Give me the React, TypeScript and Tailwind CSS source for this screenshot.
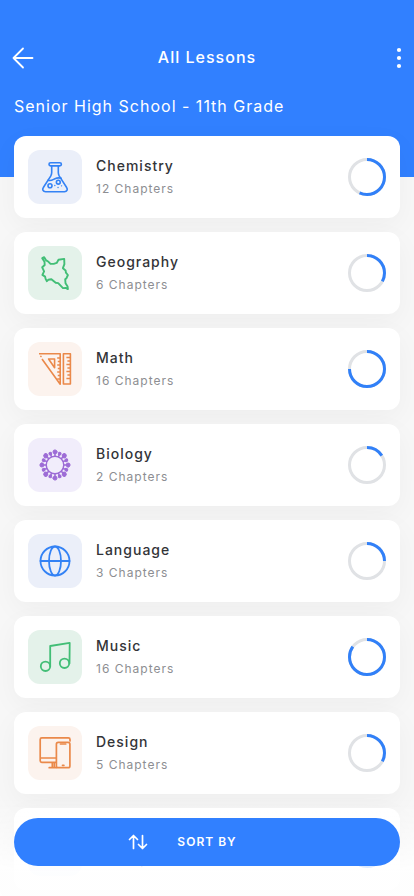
import type { ReactNode } from "react";

type Tone = "blue" | "green" | "orange" | "purple";

interface Lesson {
  title: string;
  chapters: number;
  progress: number;
  tone: Tone;
  icon: ReactNode;
}

const tones: Record<Tone, string> = {
  blue: "bg-[#ebeff9] text-[#3382f5]",
  green: "bg-[#e4f2ea] text-[#42be76]",
  orange: "bg-[#fcf3ee] text-[#ea894a]",
  purple: "bg-[#f1edfb] text-[#9d6cd6]",
};

function Glyph({ children, width = 1.8 }: { children: ReactNode; width?: number }) {
  return (
    <svg
      viewBox="0 0 54 54"
      className="size-full"
      fill="none"
      stroke="currentColor"
      strokeWidth={width}
      strokeLinecap="round"
      strokeLinejoin="round"
      aria-hidden="true"
    >
      {children}
    </svg>
  );
}

const flask = (
  <Glyph width={1.6}>
    <rect x="21" y="12.7" width="12.4" height="3.2" rx="1.6" />
    <path d="M23.7 16v6.500c0 1.400-.4 2.500-1 3.600l-7.200 11.200c-1.700 2.600-.3 4.400 2 4.400h19c2.300 0 3.700-1.800 2-4.400l-7.200-11.200c-.6-1.100-1-2.200-1-3.600V16" />
    <path d="M20 30.300c3.600.9 4.900-.7 7-1.600 2.200-1 4-1.100 6.200-.4" />
    <circle cx="22" cy="35.700" r="2" />
    <circle cx="30.300" cy="32.200" r="1.900" />
    <path strokeWidth="1.300" d="M26.800 35.500h.1M30 37.500h.1M33.500 35.800h.1" />
  </Glyph>
);

const region = (
  <Glyph width={1.9}>
    <path d="M16.200 11.200l2 3.200 2.300 1.400 2 2.100h3.200l3-1 1.800-3.100 5.700-.9.200 5.300-1.500 4 2.700 2.200.3 2.300 2 2.300-1.400 3.200-1.300 1.100.3 4 2.100 3.200.3 2.600-2.200-1.200-2.700.2-4.800-5-2.500-.3-4.300-3.600-3.200.6-1.300 1.400-1.300-2.300-.5-2.300-2.700-1.700 1.700-3.600-1.900-4 2.500-2.300-.2-3.300-2.300-3.500z" />
  </Glyph>
);

const rulers = (
  <Glyph width={1.600}>
    <path strokeLinecap="butt" d="M11 11.800h21.200v30.500L14 17" />
    <path d="M12.900 14.400l.1.100" />
    <path d="M20.600 17h6v8.800z" />
    <path strokeLinecap="butt" d="M35.400 11.800h7v30.200h-7z" />
    <path strokeLinecap="butt" strokeWidth="1.300" d="M32.200 16h-3M32.200 19.500h-2.400M32.200 23h-3M32.200 26.500h-2.400M32.200 30h-3M32.200 33.500h-2.400M32.200 37h-3M42.400 15.500h-4M42.400 19h-3M42.400 22.500h-4M42.400 26h-3M42.400 29.500h-4M42.400 33h-3M42.400 36.500h-4" />
  </Glyph>
);

const cell = (
  <Glyph width={1.500}>
    <circle cx="27" cy="27" r="8.800" />
    {Array.from({ length: 16 }, (_, i) => {
      const large = i % 2 === 0;
      return (
        <g key={i} transform={`rotate(${i * 22.5} 27 27)`}>
          <path d={large ? "M27 18v-4" : "M27 18v-2.500"} />
          <circle cx="27" cy={large ? 13.9 : 14.7} r={large ? 2 : 1.4} fill="currentColor" strokeWidth="1" />
        </g>
      );
    })}
  </Glyph>
);

const globe = (
  <Glyph>
    <circle cx="27" cy="27" r="14.500" />
    <ellipse cx="27" cy="27" rx="6" ry="14.500" />
    <path d="M12.500 27h29" />
  </Glyph>
);

const notes = (
  <Glyph>
    <circle cx="17.500" cy="36.300" r="4.700" />
    <circle cx="36.500" cy="33.300" r="4.700" />
    <path d="M22.200 36.300V16l19.500-3.200-.2 20.500" />
  </Glyph>
);

const devices = (
  <Glyph width={1.7}>
    <path d="M42 15v-1.600c0-1-.6-1.600-1.600-1.600H13.800c-1 0-1.600.6-1.600 1.600v21.300c0 1 .6 1.600 1.600 1.600h14.300M12.200 32h16M24.300 36.500v4M26.300 36.500v4M21.200 41.700h7" />
    <rect x="28.400" y="16.400" width="13.500" height="25.300" rx="1.800" />
    <path d="M32.500 18h5.200M34.500 39.300h1.400" />
  </Glyph>
);

const lessons: Lesson[] = [
  { title: "Chemistry", chapters: 12, progress: 57, tone: "blue", icon: flask },
  { title: "Geography", chapters: 6, progress: 33, tone: "green", icon: region },
  { title: "Math", chapters: 16, progress: 75, tone: "orange", icon: rulers },
  { title: "Biology", chapters: 2, progress: 16, tone: "purple", icon: cell },
  { title: "Language", chapters: 3, progress: 25, tone: "blue", icon: globe },
  { title: "Music", chapters: 16, progress: 85, tone: "green", icon: notes },
  { title: "Design", chapters: 5, progress: 33, tone: "orange", icon: devices },
  { title: "Chemistry", chapters: 12, progress: 57, tone: "blue", icon: flask },
];

function ProgressRing({ value }: { value: number }) {
  return (
    <svg viewBox="0 0 38 38" className="size-[38px] shrink-0" fill="none" strokeWidth="3" role="img" aria-label={`${value}% complete`}>
      <circle cx="19" cy="19" r="17.500" stroke="#e0e2e5" />
      <circle
        cx="19"
        cy="19"
        r="17.500"
        stroke="#3180f8"
        pathLength="100"
        strokeDasharray={`${value} 100`}
        transform="rotate(-90 19 19)"
      />
    </svg>
  );
}

function LessonCard({ lesson }: { lesson: Lesson }) {
  return (
    <li className="flex items-center gap-3.5 rounded-xl bg-white p-3.5 shadow-[0_8px_28px_rgba(0,0,0,0.04)]">
      <div className={`size-[54px] shrink-0 rounded-xl ${tones[lesson.tone]}`}>{lesson.icon}</div>
      <div className="flex min-w-0 flex-1 flex-col gap-[3px] pt-px">
        <h3 className="text-sm leading-5 font-medium tracking-[1px] text-[#333438]">{lesson.title}</h3>
        <p className="text-xs leading-5 tracking-[1px] text-[#8d8e92]">{lesson.chapters} Chapters</p>
      </div>
      <ProgressRing value={lesson.progress} />
    </li>
  );
}

export default function App() {
  return (
    <div className="min-h-screen bg-[#f7f7f7] pb-1.5 font-['Inter','Liberation_Sans',sans-serif]">
      <header className="bg-[#3180ff] px-3 pt-11 pb-[59px] text-white">
        <div className="flex items-center justify-between">
          <button type="button" aria-label="Back" className="flex h-7 w-6 items-center">
            <svg viewBox="0 0 22 22" className="size-[22px]" fill="none" stroke="currentColor" strokeWidth="1.800" strokeLinecap="round" strokeLinejoin="round" aria-hidden="true">
              <path d="M20.500 11h-19M11 1.500L1.500 11l9.500 9.500" />
            </svg>
          </button>
          <h1 className="pb-0.5 text-base leading-6 font-medium tracking-[1px]">All Lessons</h1>
          <button type="button" aria-label="More options" className="flex h-7 w-6 items-center justify-end">
            <svg viewBox="0 0 6 22" className="h-[22px] w-1.5" fill="currentColor" aria-hidden="true">
              <circle cx="3" cy="3" r="2.100" />
              <circle cx="3" cy="11" r="2.100" />
              <circle cx="3" cy="19" r="2.100" />
            </svg>
          </button>
        </div>
        <h2 className="mt-[22px] pl-0.5 text-base leading-6 tracking-[1px]">Senior High School - 11th Grade</h2>
      </header>

      <main className="-mt-[41px] px-3.5">
        <ul className="flex flex-col gap-3.5">
          {lessons.map((lesson, i) => (
            <LessonCard key={i} lesson={lesson} />
          ))}
        </ul>
      </main>

      <div className="fixed inset-x-0 bottom-0 bg-linear-to-b from-white/0 to-white/90 to-75% px-3.5 pt-[18px] pb-[30px]">
        <button type="button" className="grid h-12 w-full grid-cols-[1fr_auto_1fr] items-center gap-[29px] rounded-full bg-[#3180ff] text-xs font-semibold tracking-[1px] text-white">
          <svg viewBox="0 0 20 16" className="h-4 w-5 justify-self-end" fill="none" stroke="currentColor" strokeWidth="1.700" strokeLinecap="round" strokeLinejoin="round" aria-hidden="true">
            <path d="M5.500 14.500v-13M1.500 5.500l4-4 4 4M14.500 1.500v13M10.500 10.500l4 4 4-4" />
          </svg>
          SORT BY
        </button>
      </div>
    </div>
  );
}
